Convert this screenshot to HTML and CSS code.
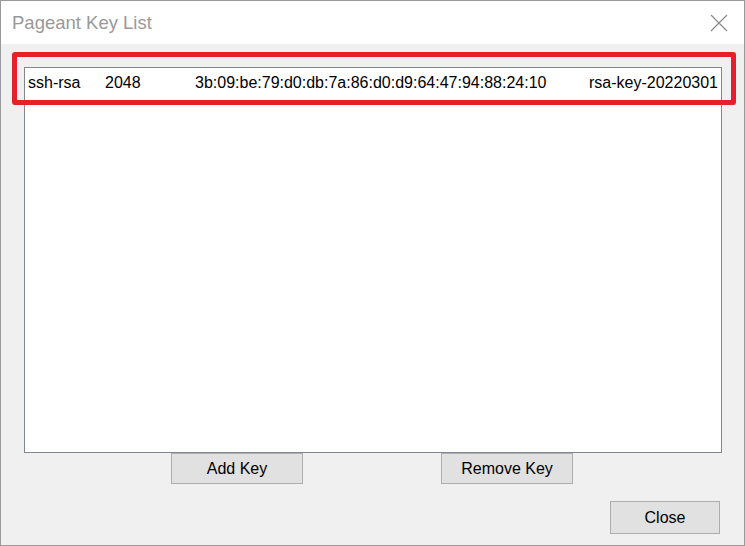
FILE: index.html
```html
<!DOCTYPE html>
<html lang="en">
  <head>
    <meta charset="UTF-8" />
    <meta name="viewport" content="width=device-width, initial-scale=1.0" />
    <title>Pageant Key List</title>
    <link rel="stylesheet" href="styles.css">
  </head>
  <body>
    <div class="window">
        <div class="titlebar">
            <span class="title">Pageant Key List</span>
            <svg class="close-x" width="18" height="18" viewBox="0 0 18 18">
                <path d="M1 1 L17 17 M17 1 L1 17" stroke="#8a8a8a" stroke-width="1.2" fill="none" />
            </svg>
        </div>

        <div class="content">
            <div class="list-wrap">
                <div class="keylist">
                    <div class="row">
                        <span class="col-type">ssh-rsa</span>
                        <span class="col-bits">2048</span>
                        <span class="col-fp">3b:09:be:79:d0:db:7a:86:d0:d9:64:47:94:88:24:10</span>
                        <span class="col-name">rsa-key-20220301</span>
                    </div>
                </div>
                <!-- red frame around the selected key -->
                <div class="mark"></div>
            </div>

            <div class="buttons">
                <button class="btn btn-add">Add Key</button>
                <button class="btn btn-remove">Remove Key</button>
            </div>

            <div class="footer">
                <button class="btn btn-close">Close</button>
            </div>
        </div>
    </div>
  </body>
</html>
```

FILE: styles.css
```css
body {
    margin: 0;
    font-family: "Liberation Sans", Arial, sans-serif;
    background: #ffffff;
}
.window {
    width: 745px;
    height: 546px;
    box-sizing: border-box;
    border: 1px solid #9a9a9a;
    display: flex;
    flex-direction: column;
    background: #f0f0f0;
}
.titlebar {
    height: 43px;
    background: #ffffff;
    display: flex;
    align-items: center;
    justify-content: space-between;
    padding: 0 16px 0 11px;
}
.title {
    font-size: 18.5px;
    color: #999999;
}
.close-x {
    display: block;
}
.content {
    flex: 1;
    display: flex;
    flex-direction: column;
    padding: 23px 22px 0 23px;
}
.list-wrap {
    position: relative;
}
.keylist {
    height: 386px;
    box-sizing: border-box;
    border: 1px solid #828790;
    background: #ffffff;
}
.row {
    display: flex;
    height: 30px;
    align-items: center;
    font-size: 16px;
    color: #000000;
    white-space: nowrap;
    overflow: hidden;
}
.col-type {
    width: 77px;
    padding-left: 3px;
}
.col-bits {
    width: 90px;
}
.col-fp {
    width: 394px;
}
.mark {
    position: absolute;
    left: -12px;
    top: -15px;
    width: 724px;
    height: 53px;
    box-sizing: border-box;
    border: 5px solid #e5202b;
    border-radius: 3px;
}
.buttons {
    display: flex;
    padding-left: 147px;
    column-gap: 138px;
}
.btn {
    font-family: "Liberation Sans", Arial, sans-serif;
    font-size: 16px;
    color: #000000;
    background: #e1e1e1;
    border: 1px solid #adadad;
    border-radius: 0;
    padding: 0;
}
.btn-add,
.btn-remove {
    width: 132px;
    height: 31px;
}
.footer {
    display: flex;
    justify-content: flex-end;
    margin-top: 17px;
    padding-right: 2px;
}
.btn-close {
    width: 110px;
    height: 33px;
}
```
